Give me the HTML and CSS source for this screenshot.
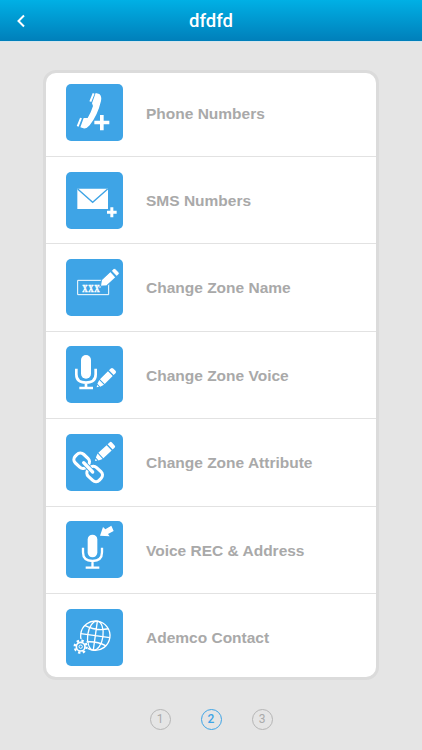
FILE: index.html
```html
<!DOCTYPE html>
<html lang="en">
<head>
    <meta charset="UTF-8">
    <meta name="viewport" content="width=device-width, initial-scale=1.0">
    <title>dfdfd</title>
    <link rel="stylesheet" href="styles.css">
</head>
<body>
    <header class="header">
        <a class="back" href="#" aria-label="Back">
            <svg width="10" height="14" viewBox="0 0 10 14"><path d="M8 1.500 2.500 7 8 12.500"/></svg>
        </a>
        <h1>dfdfd</h1>
    </header>

    <main class="card">
        <ul class="menu">
            <li>
                <svg class="icon" viewBox="18 18 171 171">
                    <path class="line" d="M101 46L91 71M63 120L53 145" stroke-width="6"/>
                    <path d="M107 45L118 48Q126 55 123 69Q113 112 89 142Q80 153 70 151L61 148L71 120L83 120Q93 104 99 84L96 76Z"/>
                    <path d="M120 111h11v17h17v11h-17v18h-11v-18h-17v-11h17z"/>
                </svg>
                <span>Phone Numbers</span>
            </li>
            <li>
                <svg class="icon" viewBox="18 18 171 171">
                    <path d="M52 68h92v61H52z"/>
                    <path class="gap" d="M53 69L98 109L143 69" stroke-width="4"/>
                    <path d="M151 124h9v10h10v9h-10v11h-9v-11h-10v-9h10z"/>
                </svg>
                <span>SMS Numbers</span>
            </li>
            <li>
                <svg class="icon" viewBox="18 18 171 171">
                    <path class="line" d="M53 82h93v43H53z" stroke-width="3"/>
                    <text x="67" y="116" textLength="54" lengthAdjust="spacingAndGlyphs">XXX</text>
                    <g class="outlined" transform="translate(120 101) rotate(-43)">
                        <path d="M2 0L17-12H54V12H17Z"/>
                        <path d="M57-12h9q5 0 5 5v14q0 5-5 5h-9z"/>
                    </g>
                    <circle cx="120" cy="102" r="2.5"/>
                </svg>
                <span>Change Zone Name</span>
            </li>
            <li>
                <svg class="icon" viewBox="18 18 171 171">
                    <rect x="63" y="45" width="30" height="71" rx="15"/>
                    <path class="line" d="M49 86v17q0 25 29 25t29-25V86M78 128v16M58 144h41" stroke-width="8"/>
                    <g transform="translate(110 142) rotate(-45)">
                        <path d="M0 0L6-4V4ZM9-6L21-10V10L9 6ZM24-10H58V10H24ZM62-10h8q5 0 5 5v10q0 5-5 5h-8z"/>
                    </g>
                </svg>
                <span>Change Zone Voice</span>
            </li>
            <li>
                <svg class="icon" viewBox="18 18 171 171">
                    <g class="line" stroke-width="9.500">
                        <rect x="-23" y="-18" width="46" height="36" rx="14" transform="translate(65 98) rotate(43)"/>
                        <rect x="-23" y="-18" width="46" height="36" rx="14" transform="translate(104 138) rotate(43)"/>
                        <path class="gap" d="M75 108L94 128" stroke-width="15"/>
                        <path d="M71 104L98 132" stroke-width="10" stroke-linecap="round"/>
                    </g>
                    <g transform="translate(105 99) rotate(-43)">
                        <path d="M0 0L6-4V4ZM9-6L21-11V11L9 6ZM24-11H58V11H24ZM62-11h8q5 0 5 5v12q0 5-5 5h-8z"/>
                    </g>
                </svg>
                <span>Change Zone Attribute</span>
            </li>
            <li>
                <svg class="icon" viewBox="18 18 171 171">
                    <rect x="83" y="59" width="29" height="68" rx="14.500"/>
                    <path class="line" d="M69 98v14q0 26 28.500 26t28.500-26V98M97.500 138v18M77 158h41" stroke-width="7"/>
                    <path d="M120 62L129 36L136 43L154 32L161 48L144 57L149 64Z"/>
                </svg>
                <span>Voice REC &amp; Address</span>
            </li>
            <li>
                <svg class="icon" viewBox="18 18 171 171">
                    <g class="line" stroke-width="4" transform="rotate(8 106 98)">
                        <circle cx="106" cy="98" r="44"/>
                        <ellipse cx="106" cy="98" rx="23" ry="44"/>
                        <path d="M106 54v88M62 98h88M70 72q36 13 72 0M70 124q36-13 72 0"/>
                    </g>
                    <circle class="shade" cx="62" cy="131" r="23"/>
                    <circle class="line" cx="62" cy="131" r="18" stroke-width="7" stroke-dasharray="7 7.130"/>
                    <circle class="line" cx="62" cy="131" r="13" stroke-width="5"/>
                    <circle class="line" cx="62" cy="131" r="5" stroke-width="3"/>
                </svg>
                <span>Ademco Contact</span>
            </li>
        </ul>
    </main>

    <nav class="pages">
        <a href="#">1</a>
        <a href="#" class="active">2</a>
        <a href="#">3</a>
    </nav>
</body>
</html>
```

FILE: styles.css
```css
* {
    box-sizing: border-box;
}
body {
    margin: 0;
    height: 750px;
    overflow: hidden;
    background-color: #e5e5e5;
    font-family: "Liberation Sans", Arial, sans-serif;
}
.header {
    display: grid;
    grid-template-columns: 60px 1fr 60px;
    align-items: center;
    height: 41px;
    background: linear-gradient(#00b0e5, #007fba);
    box-shadow: 0 1px 0 #d5e6ee;
    color: #fff;
}
.header h1 {
    margin: 0;
    font: 500 18.5px Roboto, sans-serif;
    text-align: center;
}
.back {
    display: flex;
    padding-left: 16px;
}
.back path {
    fill: none;
    stroke: #fff;
    stroke-width: 2;
}
.card {
    width: 336px;
    height: 610px;
    margin: 29px 0 0 43px;
    border: 3px solid #dbdbdb;
    border-radius: 13px;
    background-color: #fff;
    overflow: hidden;
}
.menu {
    list-style: none;
    margin: -3.400px 0 0;
    padding: 0;
}
.menu li {
    display: flex;
    align-items: center;
    gap: 23px;
    height: 87.400px;
    padding-left: 20px;
    border-bottom: 1px solid #e2e2e2;
    color: #a9a9a9;
    font-size: 15.500px;
    font-weight: bold;
}
.menu li:last-child {
    border-bottom: none;
}
.menu span {
    padding-top: 1.500px;
}
.icon {
    width: 57px;
    height: 57px;
    border-radius: 5px;
    background-color: #3ea4e6;
    fill: #fff;
}
.icon .line {
    fill: none;
    stroke: #fff;
}
.icon .gap {
    fill: none;
    stroke: #3ea4e6;
}
.icon .shade {
    fill: #3ea4e6;
}
.icon .outlined {
    stroke: #3ea4e6;
    stroke-width: 3;
}
.icon text {
    font: bold 32px "Liberation Serif", serif;
    letter-spacing: 3px;
    stroke: #fff;
    stroke-width: 1.500;
}
.pages {
    display: flex;
    justify-content: center;
    gap: 30px;
    margin-top: 28.500px;
}
.pages a {
    display: flex;
    align-items: center;
    justify-content: center;
    width: 21px;
    height: 21px;
    border: 1px solid #b5b5b5;
    border-radius: 50%;
    color: #aaa;
    font: 12px Roboto, sans-serif;
    text-decoration: none;
}
.pages .active {
    border-color: #3ea4e6;
    color: #3ea4e6;
    font-weight: 500;
}
```
